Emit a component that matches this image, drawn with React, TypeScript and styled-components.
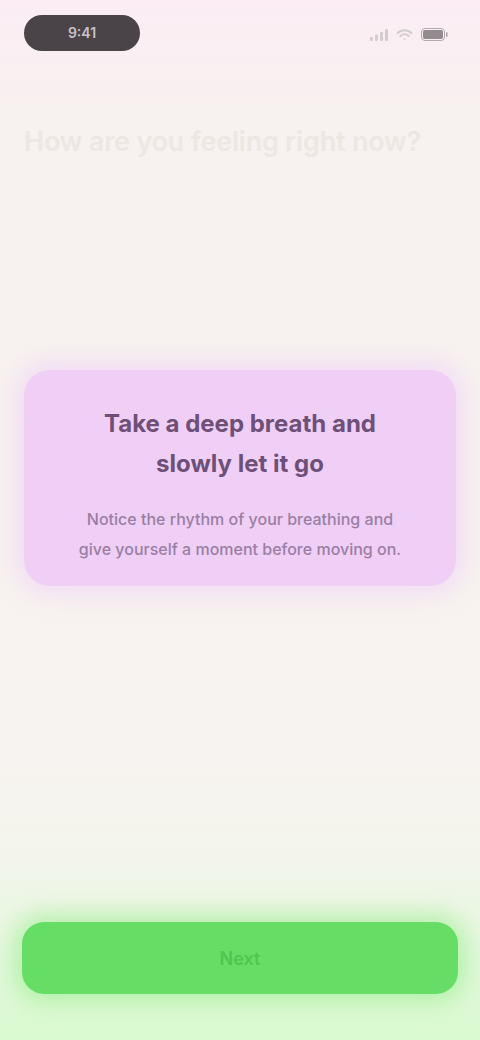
import { FC } from 'react';
import styled, { createGlobalStyle } from 'styled-components';

const GlobalStyle = createGlobalStyle`
  html, body {
    margin: 0;
    padding: 0;
    background: #f7f3f0;
  }
  body {
    font-family: Inter, "Noto Sans", sans-serif;
  }
  * {
    box-sizing: border-box;
  }
`;

const Screen = styled.div`
  width: 480px;
  height: 1040px;
  display: flex;
  flex-direction: column;
  background: linear-gradient(
    180deg,
    #fcedf5 0px,
    #f7f1ef 110px,
    #f7f3f0 760px,
    #f3f5ec 860px,
    #d9fad0 1040px
  );
  overflow: hidden;
`;

const TopBar = styled.div`
  display: flex;
  align-items: center;
  justify-content: space-between;
  padding: 13px 32px 0 24px;
  height: 52px;
`;

const Pill = styled.div`
  height: 36px;
  width: 116px;
  border-radius: 18px;
  background: #4a4347;
  color: #c9c2c6;
  font-size: 14px;
  font-weight: 600;
  display: flex;
  align-items: center;
  justify-content: center;
`;

const Status = styled.div`
  display: flex;
  align-items: center;
  gap: 8px;
  color: #d6cfd2;
  font-size: 14px;
  font-weight: 500;
  padding-top: 4px;
`;

const FaintTitle = styled.h1`
  margin: 72px 0 0 24px;
  font-size: 27px;
  line-height: 36px;
  font-weight: 600;
  color: #ece7e3;
  letter-spacing: -0.2px;
`;

const Body = styled.div`
  flex: 1;
  display: flex;
  flex-direction: column;
  padding: 0 24px;
`;

const Card = styled.section`
  margin-top: 210px;
  padding: 34px 52px 22px;
  border-radius: 26px;
  background: #efcff6;
  box-shadow: 0 0 24px 6px rgba(239, 207, 246, 0.7);
  display: flex;
  flex-direction: column;
  align-items: center;
  text-align: center;
  gap: 20px;
`;

const CardTitle = styled.h2`
  margin: 0;
  font-size: 24px;
  line-height: 40px;
  font-weight: 700;
  color: #6e4f78;
`;

const CardText = styled.p`
  margin: 0;
  font-size: 16px;
  line-height: 30px;
  font-weight: 500;
  color: #9a7ea3;
`;

const Footer = styled.div`
  padding: 0 22px 46px;
`;

const PrimaryButton = styled.button`
  width: 100%;
  height: 72px;
  border: none;
  border-radius: 22px;
  background: #66de66;
  box-shadow: 0 0 22px 8px rgba(140, 236, 130, 0.55);
  color: #50c650;
  font-family: inherit;
  font-size: 18px;
  font-weight: 600;
  cursor: pointer;
`;

const SignalIcon: FC = () => (
  <svg width="18" height="12" viewBox="0 0 18 12" fill="#d3ccd0">
    <rect x="0" y="8" width="3" height="4" rx="1" />
    <rect x="5" y="5.5" width="3" height="6.5" rx="1" />
    <rect x="10" y="3" width="3" height="9" rx="1" />
    <rect x="15" y="0" width="3" height="12" rx="1" />
  </svg>
);

const WifiIcon: FC = () => (
  <svg width="17" height="12" viewBox="0 0 17 12" fill="none" stroke="#d3ccd0" strokeWidth="2" strokeLinecap="round">
    <path d="M1.5 4.2a10 10 0 0 1 14 0" />
    <path d="M4.3 7a6 6 0 0 1 8.4 0" />
    <circle cx="8.5" cy="10.2" r="1" fill="#d3ccd0" stroke="none" />
  </svg>
);

const BatteryIcon: FC = () => (
  <svg width="27" height="13" viewBox="0 0 27 13" fill="none">
    <rect x="0.5" y="0.5" width="23" height="12" rx="3.5" stroke="#b1a9ad" />
    <rect x="2" y="2" width="20" height="9" rx="2" fill="#928a8e" />
    <rect x="25" y="4" width="1.6" height="5" rx="0.8" fill="#b1a9ad" />
  </svg>
);

const App: FC = () => (
  <>
    <GlobalStyle />
    <Screen>
      <TopBar>
        <Pill>9:41</Pill>
        <Status>
          <SignalIcon />
          <WifiIcon />
          <BatteryIcon />
        </Status>
      </TopBar>

      <FaintTitle>How are you feeling right now?</FaintTitle>

      <Body>
        <Card>
          <CardTitle>
            Take a deep breath and
            <br />
            slowly let it go
          </CardTitle>
          <CardText>
            Notice the rhythm of your breathing and
            <br />
            give yourself a moment before moving on.
          </CardText>
        </Card>
      </Body>

      <Footer>
        <PrimaryButton>Next</PrimaryButton>
      </Footer>
    </Screen>
  </>
);

export default App;
